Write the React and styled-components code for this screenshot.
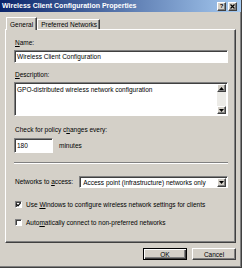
import React from 'react';
import styled, { createGlobalStyle } from 'styled-components';

const GlobalStyle = createGlobalStyle`
  html, body {
    margin: 0;
    padding: 0;
    background: #d4d0c8;
  }
  body {
    font-family: "Liberation Sans", Arial, sans-serif;
    font-size: 6.5px;
    color: #000;
  }
  * {
    box-sizing: border-box;
  }
`;

const raised = `
  background: #d4d0c8;
  border: 1px solid;
  border-color: #fff #404040 #404040 #fff;
  box-shadow: inset -1px -1px 0 #808080;
`;

const sunken = `
  background: #fff;
  border: 1px solid;
  border-color: #808080 #fff #fff #808080;
  box-shadow: inset 1px 1px 0 #404040;
`;

const Window = styled.div`
  width: 242px;
  height: 268px;
  display: flex;
  flex-direction: column;
  background: #d4d0c8;
  border-right: 1px solid #404040;
  border-bottom: 1px solid #404040;
  box-shadow: inset -1px -1px 0 #808080;
  overflow: hidden;
`;

const TitleBar = styled.div`
  height: 12px;
  display: flex;
  align-items: center;
  gap: 2px;
  padding: 0 4px 0 2px;
  background: linear-gradient(to right, #0a246a, #a6caf0);
`;

const Title = styled.div`
  flex: 1;
  color: #fff;
  font-weight: bold;
  font-size: 7px;
  line-height: 12px;
  white-space: nowrap;
`;

const CaptionButton = styled.div`
  ${raised}
  width: 9px;
  height: 9px;
  display: flex;
  align-items: center;
  justify-content: center;
  font-weight: bold;
  font-size: 6px;
  line-height: 1;
`;

const Body = styled.div`
  flex: 1;
  display: flex;
  flex-direction: column;
  padding: 5px 5px 0 5px;
`;

const TabRow = styled.div`
  height: 12px;
  display: flex;
  align-items: flex-end;
  padding-left: 1px;
`;

const Tab = styled.div`
  position: relative;
  z-index: ${({ $active }) => ($active ? 1 : 0)};
  height: ${({ $active }) => ($active ? 13 : 10)}px;
  margin-bottom: ${({ $active }) => ($active ? -1 : 0)}px;
  padding: ${({ $active }) => ($active ? '0 3px' : '0 2px 0 3px')};
  display: flex;
  align-items: center;
  background: #d4d0c8;
  border-top: 1px solid #fff;
  border-left: 1px solid #fff;
  border-right: 1px solid #404040;
  box-shadow: inset -1px 0 0 #808080;
  white-space: nowrap;
`;

const Panel = styled.div`
  ${raised}
  height: 214px;
  display: flex;
  flex-direction: column;
  padding: 9px 7px 0 8px;
`;

const Label = styled.div`
  height: 8px;
  line-height: 8px;
  margin-top: ${({ $top }) => $top || 0}px;
  padding-left: 1px;
  white-space: nowrap;
`;

const Key = styled.span`
  text-decoration: underline;
`;

const TextBox = styled.div`
  ${sunken}
  height: ${({ $h }) => $h}px;
  width: ${({ $w }) => ($w ? `${$w}px` : 'auto')};
  margin-top: ${({ $top }) => $top || 0}px;
  padding-left: 2px;
  display: flex;
  align-items: center;
  white-space: nowrap;
`;

const MultiBox = styled.div`
  ${sunken}
  height: 34px;
  margin-top: 3px;
  display: flex;
  padding: 1px 1px 1px 2px;
`;

const MultiText = styled.div`
  flex: 1;
  padding-top: 2px;
  line-height: 8px;
`;

const ScrollBar = styled.div`
  width: 9px;
  display: flex;
  flex-direction: column;
  justify-content: space-between;
  background: #ecebe7;
`;

const ArrowButton = styled.div`
  ${raised}
  height: 8px;
  display: flex;
  align-items: center;
  justify-content: center;
`;

const Row = styled.div`
  display: flex;
  align-items: center;
  gap: ${({ $gap }) => $gap}px;
  margin-top: ${({ $top }) => $top || 0}px;
`;

const Separator = styled.div`
  height: 2px;
  margin-top: 9px;
  border-top: 1px solid #808080;
  border-bottom: 1px solid #fff;
`;

const Combo = styled.div`
  ${sunken}
  flex: 1;
  height: 12px;
  display: flex;
  align-items: center;
  padding: 1px 1px 1px 3px;
`;

const ComboText = styled.div`
  flex: 1;
  white-space: nowrap;
`;

const DropButton = styled(ArrowButton)`
  width: 9px;
  height: 9px;
`;

const CheckRow = styled.div`
  display: flex;
  align-items: center;
  gap: 4px;
  height: 8px;
  margin-top: ${({ $top }) => $top}px;
  padding-left: 1px;
  white-space: nowrap;
`;

const CheckBox = styled.div`
  ${sunken}
  width: 7px;
  height: 7px;
  display: flex;
  align-items: center;
  justify-content: center;
`;

const Footer = styled.div`
  display: flex;
  justify-content: flex-end;
  gap: 5px;
  margin-top: 5px;
`;

const Button = styled.div`
  ${raised}
  width: 44px;
  height: 12px;
  display: flex;
  align-items: center;
  justify-content: center;
  ${({ $default }) =>
    $default &&
    `
    border: 1px solid #000;
    box-shadow: inset 1px 1px 0 #fff, inset -1px -1px 0 #404040, inset -2px -2px 0 #808080;
  `}
`;

const Arrow = ({ up }) => (
  <svg width="5" height="3" viewBox="0 0 5 3">
    <polygon points={up ? '2.5,0 5,3 0,3' : '0,0 5,0 2.5,3'} fill="#000" />
  </svg>
);

const CloseGlyph = () => (
  <svg width="5" height="5" viewBox="0 0 5 5">
    <path d="M0.5 0.5 L4.5 4.5 M4.5 0.5 L0.5 4.5" stroke="#000" strokeWidth="1.2" />
  </svg>
);

const CheckMark = () => (
  <svg width="5" height="5" viewBox="0 0 5 5">
    <path d="M0.5 2.2 L2 3.8 L4.6 0.8" stroke="#000" strokeWidth="1.2" fill="none" />
  </svg>
);

const App = () => (
  <>
    <GlobalStyle />
    <Window>
      <TitleBar>
        <Title>Wireless Client Configuration Properties</Title>
        <CaptionButton>?</CaptionButton>
        <CaptionButton>
          <CloseGlyph />
        </CaptionButton>
      </TitleBar>
      <Body>
        <TabRow>
          <Tab $active>General</Tab>
          <Tab>Preferred Networks</Tab>
        </TabRow>
        <Panel>
          <Label>
            <Key>N</Key>ame:
          </Label>
          <TextBox $h={13} $top={3}>
            Wireless Client Configuration
          </TextBox>
          <Label $top={8}>
            <Key>D</Key>escription:
          </Label>
          <MultiBox>
            <MultiText>GPO-distributed wireless network configuration</MultiText>
            <ScrollBar>
              <ArrowButton>
                <Arrow up />
              </ArrowButton>
              <ArrowButton>
                <Arrow />
              </ArrowButton>
            </ScrollBar>
          </MultiBox>
          <Label $top={10}>
            Check for policy c<Key>h</Key>anges every:
          </Label>
          <Row $gap={6} $top={4}>
            <TextBox $h={15} $w={39}>
              180
            </TextBox>
            <span>minutes</span>
          </Row>
          <Separator />
          <Row $gap={6} $top={12}>
            <Label>
              Networks to <Key>a</Key>ccess:
            </Label>
            <Combo>
              <ComboText>Access point (infrastructure) networks only</ComboText>
              <DropButton>
                <Arrow />
              </DropButton>
            </Combo>
          </Row>
          <CheckRow $top={12}>
            <CheckBox>
              <CheckMark />
            </CheckBox>
            <span>
              Use <Key>W</Key>indows to configure wireless network settings for clients
            </span>
          </CheckRow>
          <CheckRow $top={10}>
            <CheckBox />
            <span>
              Auto<Key>m</Key>atically connect to non-preferred networks
            </span>
          </CheckRow>
        </Panel>
        <Footer>
          <Button $default>OK</Button>
          <Button>Cancel</Button>
        </Footer>
      </Body>
    </Window>
  </>
);

export default App;
